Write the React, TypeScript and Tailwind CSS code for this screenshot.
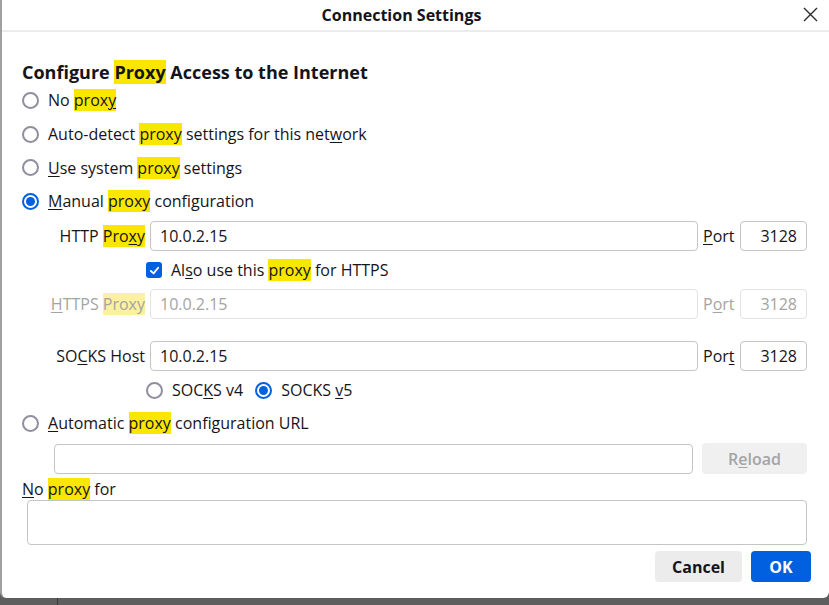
import type { ReactNode } from 'react'

const font = { fontFamily: '"Open Sans", "Noto Sans", sans-serif' }

function Hl({ children, dim }: { children: ReactNode; dim?: boolean }) {
  return <span className={dim ? 'bg-[#fbf1a0]' : 'bg-[#fbe600]'}>{children}</span>
}

function U({ children }: { children: ReactNode }) {
  return <span className="underline underline-offset-2 decoration-1">{children}</span>
}

function Radio({ checked }: { checked?: boolean }) {
  return checked ? (
    <span className="flex h-[17px] w-[17px] shrink-0 items-center justify-center rounded-full border-2 border-[#0060df]">
      <span className="h-[9px] w-[9px] rounded-full bg-[#0060df]" />
    </span>
  ) : (
    <span className="h-[17px] w-[17px] shrink-0 rounded-full border-2 border-[#8f8f9d]" />
  )
}

function Field({ value, disabled, className }: { value?: string; disabled?: boolean; className?: string }) {
  return (
    <div
      className={`flex h-[30px] items-center rounded-[4px] border px-[9px] ${
        disabled ? 'border-[#e3e3e3] text-[#a4a4a4]' : 'border-[#c4c4c4] text-[#15141a]'
      } ${className ?? ''}`}
    >
      {value}
    </div>
  )
}

function ProxyRow({ label, value, port, disabled }: { label: ReactNode; value: string; port: ReactNode; disabled?: boolean }) {
  return (
    <div className={`flex h-[30px] items-center ${disabled ? 'text-[#a4a4a4]' : ''}`}>
      <div className="w-[128px] pr-[5px] text-right">{label}</div>
      <Field value={value} disabled={disabled} className="flex-1" />
      <div className="w-[42px] pl-[5px]">{port}</div>
      <Field value="3128" disabled={disabled} className="w-[67px] justify-end" />
    </div>
  )
}

export default function App() {
  return (
    <div className="flex h-[605px] w-[829px] flex-col bg-[#5e5e5e]" style={font}>
      <div className="flex h-[598px] flex-col rounded-b-[6px] border-l-2 border-[#a0a0a0] bg-white text-[16px] text-[#15141a]">
        <div className="relative flex h-[32px] shrink-0 items-center justify-center border-b-2 border-[#ebebeb] pr-[28px]">
          <span className="text-[16px] font-bold">Connection Settings</span>
          <svg className="absolute right-[11px] top-[7px]" width="15" height="15" viewBox="0 0 15 15" fill="none" stroke="#2b2b2b" strokeWidth="1.4">
            <path d="M1 1L14 14M14 1L1 14" />
          </svg>
        </div>

        <div className="flex flex-1 flex-col pl-[20px] pr-[22px]">
          <div className="mt-[29px] h-[22px] text-[18px] font-bold leading-[22px]">
            Configure <Hl>Proxy</Hl> Access to the Internet
          </div>

          <div className="flex h-[34px] items-center gap-[9px]">
            <Radio />
            <span>
              No <Hl>prox<U>y</U></Hl>
            </span>
          </div>
          <div className="flex h-[34px] items-center gap-[9px]">
            <Radio />
            <span>
              Auto-detect <Hl>proxy</Hl> settings for this net<U>w</U>ork
            </span>
          </div>
          <div className="flex h-[33px] items-center gap-[9px]">
            <Radio />
            <span>
              <U>U</U>se system <Hl>proxy</Hl> settings
            </span>
          </div>
          <div className="flex h-[34px] items-center gap-[9px]">
            <Radio checked />
            <span>
              <U>M</U>anual <Hl>proxy</Hl> configuration
            </span>
          </div>

          <div className="mt-[3px]">
            <ProxyRow
              label={
                <>
                  HTTP <Hl>Pro<U>x</U>y</Hl>
                </>
              }
              value="10.0.2.15"
              port={
                <>
                  <U>P</U>ort
                </>
              }
            />
          </div>
          <div className="flex h-[38px] items-center gap-[9px] pl-[124px]">
            <span className="flex h-[16px] w-[16px] items-center justify-center rounded-[3px] bg-[#0060df]">
              <svg width="11" height="11" viewBox="0 0 12 12" fill="none" stroke="white" strokeWidth="2" strokeLinecap="round" strokeLinejoin="round">
                <path d="M2 6.5L5 9.2L10 3" />
              </svg>
            </span>
            <span>
              Al<U>s</U>o use this <Hl>proxy</Hl> for HTTPS
            </span>
          </div>
          <ProxyRow
            disabled
            label={
              <>
                <U>H</U>TTPS <Hl dim>Proxy</Hl>
              </>
            }
            value="10.0.2.15"
            port={
              <>
                P<U>o</U>rt
              </>
            }
          />
          <div className="mt-[22px]">
            <ProxyRow
              label={
                <>
                  SO<U>C</U>KS Host
                </>
              }
              value="10.0.2.15"
              port={
                <>
                  Por<U>t</U>
                </>
              }
            />
          </div>
          <div className="flex h-[38px] items-center pl-[124px]">
            <div className="flex items-center gap-[9px]">
              <Radio />
              <span>
                SOC<U>K</U>S v4
              </span>
            </div>
            <div className="ml-[12px] flex items-center gap-[9px]">
              <Radio checked />
              <span>
                SOCKS <U>v</U>5
              </span>
            </div>
          </div>
          <div className="flex h-[28px] items-center gap-[9px]">
            <Radio />
            <span>
              <U>A</U>utomatic <Hl>proxy</Hl> configuration URL
            </span>
          </div>
          <div className="mt-[6px] flex items-center pl-[32px]">
            <Field className="flex-1" />
            <div className="ml-[9px] flex h-[31px] w-[105px] items-center justify-center rounded-[4px] bg-[#f0f0f0] font-semibold text-[#a4a4a4]">
              R<U>e</U>load
            </div>
          </div>
          <div className="flex h-[26px] items-center pt-[3px]">
            <span>
              <U>N</U>o <Hl>proxy</Hl> for
            </span>
          </div>
          <div className="ml-[5px] h-[45px] rounded-[4px] border border-[#c4c4c4]" />

          <div className="mt-[6px] flex justify-end gap-[9px]">
            <button className="h-[31px] w-[87px] rounded-[4px] bg-[#ececec] font-bold text-[#15141a]">Cancel</button>
            <button className="-mr-[4px] h-[31px] w-[60px] rounded-[4px] bg-[#0060df] font-bold text-white">OK</button>
          </div>
        </div>
      </div>
      <div className="ml-[57px] h-[7px] w-[1px] bg-[#3a3a3a]" />
    </div>
  )
}
